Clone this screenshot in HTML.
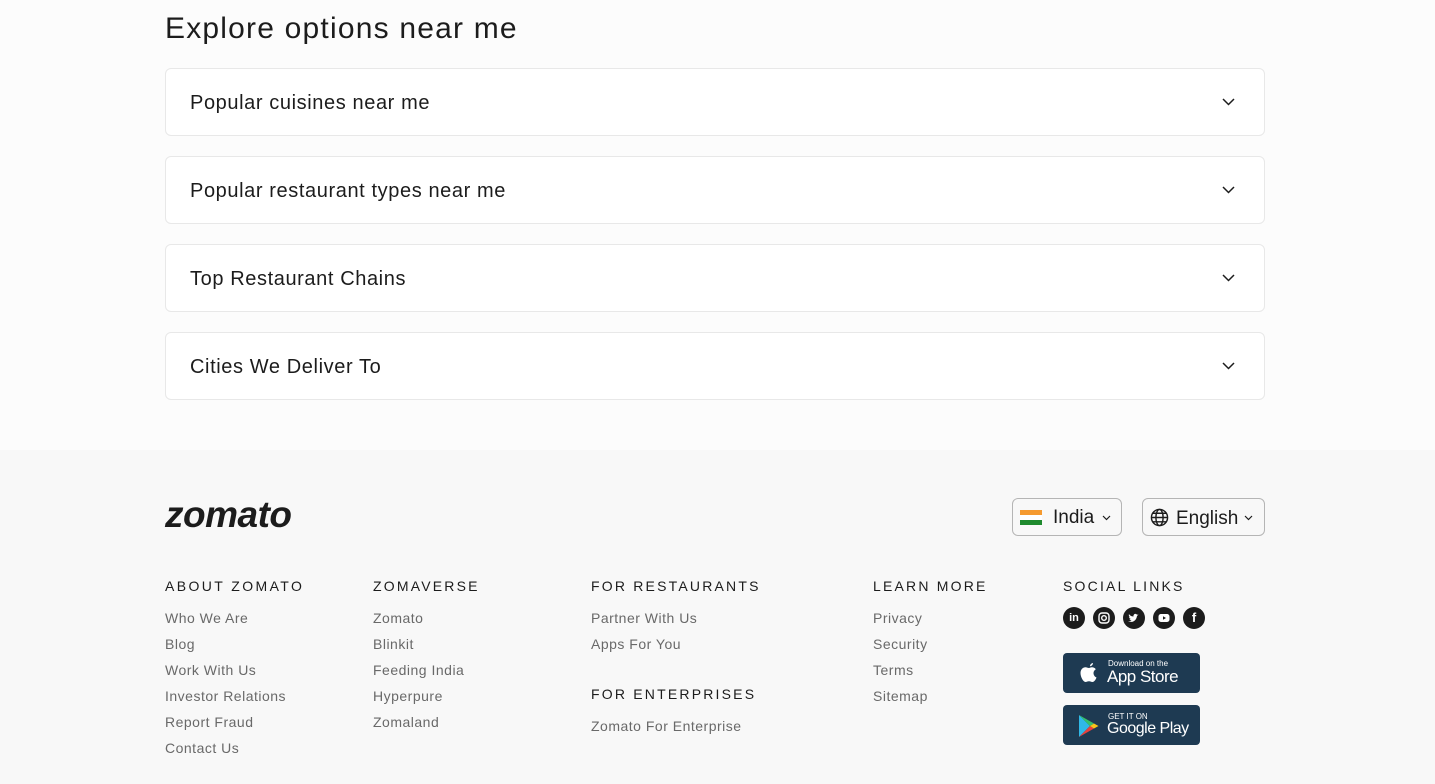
<!DOCTYPE html>
<html><head><meta charset="utf-8"><style>
*{box-sizing:border-box;margin:0;padding:0}
body{width:1435px;height:784px;overflow:hidden;font-family:"Liberation Sans",sans-serif;background:#fcfcfc;color:#1c1c1c;position:relative}
h2{position:absolute;left:165px;top:12px;font-size:30px;font-weight:400;color:#1c1c1c;letter-spacing:1.2px}
.acc{position:absolute;left:165px;width:1100px;height:68px;background:#fff;border:1px solid #e8e8e8;border-radius:6px}
.acc span{position:absolute;left:24px;top:23px;font-size:20px;color:#1c1c1c;letter-spacing:0.6px}
.acc svg{position:absolute;right:29px;top:29px}
footer{position:absolute;left:0;top:450px;width:1435px;height:334px;background:#f8f8f8}
.logo{position:absolute;left:165px;top:494px;font-size:37px;font-weight:900;font-style:italic;letter-spacing:-0.5px;color:#1c1c1c}
.sel{position:absolute;top:498px;height:38px;border:1px solid #b5b5b5;border-radius:6px;font-size:19px;color:#1c1c1c}
.h{position:absolute;top:578px;font-size:14px;letter-spacing:2.2px;font-weight:400;color:#1c1c1c}
.l{position:absolute;font-size:14px;color:#696969;letter-spacing:0.5px}
.soc{position:absolute;top:607px;width:22px;height:22px;border-radius:50%;background:#1c1c1c;color:#fff;font-size:11px;font-weight:700;text-align:center;line-height:22px}
.badge{position:absolute;left:1063px;width:137px;height:40px;background:#1e3a52;border-radius:4px;color:#fff}
</style></head><body>
<h2>Explore options near me</h2>
<div class="acc" style="top:68px"><span>Popular cuisines near me</span><svg width="13" height="8" viewBox="0 0 13 8"><path d="M1 1l5.5 5.5L12 1" fill="none" stroke="#1c1c1c" stroke-width="1.5"/></svg></div>
<div class="acc" style="top:156px"><span>Popular restaurant types near me</span><svg width="13" height="8" viewBox="0 0 13 8"><path d="M1 1l5.5 5.5L12 1" fill="none" stroke="#1c1c1c" stroke-width="1.5"/></svg></div>
<div class="acc" style="top:244px"><span>Top Restaurant Chains</span><svg width="13" height="8" viewBox="0 0 13 8"><path d="M1 1l5.5 5.5L12 1" fill="none" stroke="#1c1c1c" stroke-width="1.5"/></svg></div>
<div class="acc" style="top:332px"><span>Cities We Deliver To</span><svg width="13" height="8" viewBox="0 0 13 8"><path d="M1 1l5.5 5.5L12 1" fill="none" stroke="#1c1c1c" stroke-width="1.5"/></svg></div>
<footer></footer>
<div class="logo">zomato</div>
<div class="sel" style="left:1012px;width:110px">
<div style="position:absolute;left:7px;top:11px;width:22px;height:15px"><div style="height:5px;background:#f59a2f"></div><div style="height:5px;background:#fff"></div><div style="height:5px;background:#1f8a2e"></div></div>
<span style="position:absolute;left:40px;top:8px">India</span>
<svg style="position:absolute;left:89px;top:16px" width="9" height="6" viewBox="0 0 9 6"><path d="M1 1l3.5 3.5L8 1" fill="none" stroke="#1c1c1c" stroke-width="1.2"/></svg></div>
<div class="sel" style="left:1142px;width:123px">
<svg style="position:absolute;left:7px;top:9px" width="19" height="19" viewBox="0 0 20 20" fill="none" stroke="#1c1c1c" stroke-width="1.5"><circle cx="10" cy="10" r="8.5"/><ellipse cx="10" cy="10" rx="3.8" ry="8.5"/><path d="M1.5 10h17M3 5.5h14M3 14.5h14"/></svg>
<span style="position:absolute;left:33px;top:9px">English</span>
<svg style="position:absolute;left:101px;top:16px" width="9" height="6" viewBox="0 0 9 6"><path d="M1 1l3.5 3.5L8 1" fill="none" stroke="#1c1c1c" stroke-width="1.2"/></svg></div>
<div class="h" style="left:165px;letter-spacing:2.4px">ABOUT ZOMATO</div>
<div class="l" style="left:165px;top:610px">Who We Are</div>
<div class="l" style="left:165px;top:636px">Blog</div>
<div class="l" style="left:165px;top:662px">Work With Us</div>
<div class="l" style="left:165px;top:688px">Investor Relations</div>
<div class="l" style="left:165px;top:714px">Report Fraud</div>
<div class="l" style="left:165px;top:740px">Contact Us</div>
<div class="h" style="left:373px">ZOMAVERSE</div>
<div class="l" style="left:373px;top:610px">Zomato</div>
<div class="l" style="left:373px;top:636px">Blinkit</div>
<div class="l" style="left:373px;top:662px">Feeding India</div>
<div class="l" style="left:373px;top:688px">Hyperpure</div>
<div class="l" style="left:373px;top:714px">Zomaland</div>
<div class="h" style="left:591px">FOR RESTAURANTS</div>
<div class="l" style="left:591px;top:610px">Partner With Us</div>
<div class="l" style="left:591px;top:636px">Apps For You</div>
<div class="h" style="left:591px;top:686px">FOR ENTERPRISES</div>
<div class="l" style="left:591px;top:718px">Zomato For Enterprise</div>
<div class="h" style="left:873px">LEARN MORE</div>
<div class="l" style="left:873px;top:610px">Privacy</div>
<div class="l" style="left:873px;top:636px">Security</div>
<div class="l" style="left:873px;top:662px">Terms</div>
<div class="l" style="left:873px;top:688px">Sitemap</div>
<div class="h" style="left:1063px">SOCIAL LINKS</div>
<div class="soc" style="left:1063px">in</div>
<div class="soc" style="left:1093px"><svg width="22" height="22" viewBox="0 0 22 22" fill="none" stroke="#fff" stroke-width="1.4"><rect x="6" y="6" width="10" height="10" rx="3"/><circle cx="11" cy="11" r="2.3"/></svg></div>
<div class="soc" style="left:1123px"><svg width="22" height="22" viewBox="0 0 22 22"><path d="M5 14c3 2 8 1 9-5l1.5-1.5-1.5.3C13 6 10 7 10.5 9.5 8 9.5 6.5 8 6 7c-.5 1.5 0 2.5 1 3.2L6 10c.2 1.2 1 1.8 2 2-.5.2-1 .2-1.5 0 .3 1 1 1.5 2 1.5C7.5 14.4 6 14.4 5 14z" fill="#fff"/></svg></div>
<div class="soc" style="left:1153px"><svg width="22" height="22" viewBox="0 0 22 22"><rect x="5.5" y="7" width="11" height="8" rx="2.5" fill="#fff"/><path d="M10 9.2v3.6l3-1.8z" fill="#1c1c1c"/></svg></div>
<div class="soc" style="left:1183px;font-size:13px">f</div>
<div class="badge" style="top:653px">
<svg style="position:absolute;left:15px;top:7px" width="22" height="26" viewBox="0 0 22 26"><path d="M15 3c-1.5.2-3 1.5-3 3.2 1.5 0 3-1.4 3-3.2zM11 8c-1.3 0-2.3-.8-3.5-.8C5 7.2 2.5 9.3 2.5 13c0 4 2.8 9 5 9 1.2 0 1.8-.7 3.5-.7s2 .7 3.5.7c1.8 0 3.5-3 4-4.5-2-.8-3-2.6-3-4.5 0-1.7 1-3 2.300-3.8-1-1.5-2.5-2-3.8-2-1.5 0-2.3.8-3 .8z" fill="#fff"/></svg>
<div style="position:absolute;left:45px;top:6px;font-size:8px">Download on the</div>
<div style="position:absolute;left:44px;top:14px;font-size:17px;letter-spacing:-0.5px">App Store</div></div>
<div class="badge" style="top:705px">
<svg style="position:absolute;left:15px;top:9px" width="22" height="24" viewBox="0 0 22 24"><path d="M1 1l11 11L1 23z" fill="#2fb8e8"/><path d="M1 1l15 8.5L12 12z" fill="#34c06a"/><path d="M1 23l15-8.5L12 12z" fill="#e8403c"/><path d="M16 9.5l4.5 2.5-4.5 2.5-4-2.5z" fill="#f8c21a"/></svg>
<div style="position:absolute;left:45px;top:7px;font-size:8px">GET IT ON</div>
<div style="position:absolute;left:44px;top:15px;font-size:16px;letter-spacing:-0.5px">Google Play</div></div>
</body></html>
